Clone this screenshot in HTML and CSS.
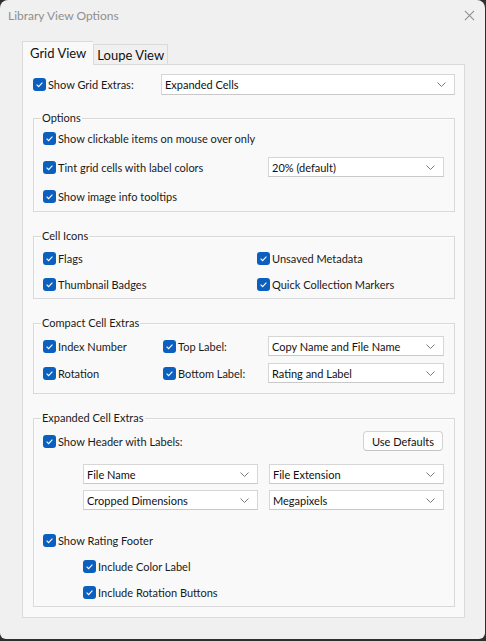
FILE: index.html
```html
<!DOCTYPE html>
<html lang="en">
<head>
<meta charset="utf-8">
<title>Library View Options</title>
<link rel="stylesheet" href="styles.css">
</head>
<body>
<div class="window">
  <div class="titlebar">
    <span class="title">Library View Options</span>
    <svg class="close" width="12" height="12" viewBox="0 0 12 12"><path d="M1 1 L11 11 M11 1 L1 11" stroke="#8c8c8c" stroke-width="1.1" fill="none"/></svg>
  </div>
  <div class="tabs">
    <div class="tab active">Grid View</div>
    <div class="tab">Loupe View</div>
  </div>
  <div class="panel">
    <div class="top-row">
      <label class="cb"><span class="box"><svg viewBox="0 0 13 13"><path d="M3.6 6.7 L5.6 8.6 L9.4 4.6"/></svg></span>Show Grid Extras:</label>
      <div class="select"><span>Expanded Cells</span><svg class="chev" viewBox="0 0 9 5"><path d="M0.5 0.5 L4.5 4.5 L8.5 0.5"/></svg></div>
    </div>

    <fieldset class="group g-options">
      <legend>Options</legend>
      <label class="cb"><span class="box"><svg viewBox="0 0 13 13"><path d="M3.6 6.7 L5.6 8.6 L9.4 4.6"/></svg></span>Show clickable items on mouse over only</label>
      <div class="split">
        <label class="cb"><span class="box"><svg viewBox="0 0 13 13"><path d="M3.6 6.7 L5.6 8.6 L9.4 4.6"/></svg></span>Tint grid cells with label colors</label>
        <div class="select"><span>20% (default)</span><svg class="chev" viewBox="0 0 9 5"><path d="M0.5 0.5 L4.5 4.5 L8.5 0.5"/></svg></div>
      </div>
      <label class="cb last-opt"><span class="box"><svg viewBox="0 0 13 13"><path d="M3.6 6.7 L5.6 8.6 L9.4 4.6"/></svg></span>Show image info tooltips</label>
    </fieldset>

    <fieldset class="group g-icons">
      <legend>Cell Icons</legend>
      <label class="cb"><span class="box"><svg viewBox="0 0 13 13"><path d="M3.6 6.7 L5.6 8.6 L9.4 4.6"/></svg></span>Flags</label>
      <label class="cb"><span class="box"><svg viewBox="0 0 13 13"><path d="M3.6 6.7 L5.6 8.6 L9.4 4.6"/></svg></span>Unsaved Metadata</label>
      <label class="cb"><span class="box"><svg viewBox="0 0 13 13"><path d="M3.6 6.7 L5.6 8.6 L9.4 4.6"/></svg></span>Thumbnail Badges</label>
      <label class="cb"><span class="box"><svg viewBox="0 0 13 13"><path d="M3.6 6.7 L5.6 8.6 L9.4 4.6"/></svg></span>Quick Collection Markers</label>
    </fieldset>

    <fieldset class="group g-compact">
      <legend>Compact Cell Extras</legend>
      <label class="cb"><span class="box"><svg viewBox="0 0 13 13"><path d="M3.6 6.7 L5.6 8.6 L9.4 4.6"/></svg></span>Index Number</label>
      <label class="cb"><span class="box"><svg viewBox="0 0 13 13"><path d="M3.6 6.7 L5.6 8.6 L9.4 4.6"/></svg></span>Top Label:</label>
      <div class="select"><span>Copy Name and File Name</span><svg class="chev" viewBox="0 0 9 5"><path d="M0.5 0.5 L4.5 4.5 L8.5 0.5"/></svg></div>
      <label class="cb"><span class="box"><svg viewBox="0 0 13 13"><path d="M3.6 6.7 L5.6 8.6 L9.4 4.6"/></svg></span>Rotation</label>
      <label class="cb"><span class="box"><svg viewBox="0 0 13 13"><path d="M3.6 6.7 L5.6 8.6 L9.4 4.6"/></svg></span>Bottom Label:</label>
      <div class="select"><span>Rating and Label</span><svg class="chev" viewBox="0 0 9 5"><path d="M0.5 0.5 L4.5 4.5 L8.5 0.5"/></svg></div>
    </fieldset>

    <fieldset class="group g-expanded">
      <legend>Expanded Cell Extras</legend>
      <div class="header-row">
        <label class="cb"><span class="box"><svg viewBox="0 0 13 13"><path d="M3.6 6.7 L5.6 8.6 L9.4 4.6"/></svg></span>Show Header with Labels:</label>
        <button class="btn" type="button">Use Defaults</button>
      </div>
      <div class="select-grid">
        <div class="select"><span>File Name</span><svg class="chev" viewBox="0 0 9 5"><path d="M0.5 0.5 L4.5 4.5 L8.5 0.5"/></svg></div>
        <div class="select"><span>File Extension</span><svg class="chev" viewBox="0 0 9 5"><path d="M0.5 0.5 L4.5 4.5 L8.5 0.5"/></svg></div>
        <div class="select"><span>Cropped Dimensions</span><svg class="chev" viewBox="0 0 9 5"><path d="M0.5 0.5 L4.5 4.5 L8.5 0.5"/></svg></div>
        <div class="select"><span>Megapixels</span><svg class="chev" viewBox="0 0 9 5"><path d="M0.5 0.5 L4.5 4.5 L8.5 0.5"/></svg></div>
      </div>
      <label class="cb footer-cb"><span class="box"><svg viewBox="0 0 13 13"><path d="M3.6 6.7 L5.6 8.6 L9.4 4.6"/></svg></span>Show Rating Footer</label>
      <label class="cb sub-cb"><span class="box"><svg viewBox="0 0 13 13"><path d="M3.6 6.7 L5.6 8.6 L9.4 4.6"/></svg></span>Include Color Label</label>
      <label class="cb sub-cb"><span class="box"><svg viewBox="0 0 13 13"><path d="M3.6 6.7 L5.6 8.6 L9.4 4.6"/></svg></span>Include Rotation Buttons</label>
    </fieldset>
  </div>
</div>
</body>
</html>
```
FILE: styles.css
```css
* { box-sizing: border-box; }

html, body {
  margin: 0;
  height: 100%;
  background: #2e2e2e;
}

body {
  font-family: "Lato", "Noto Sans", sans-serif;
  font-size: 11px;
  color: #1a1a1a;
}

.window {
  width: 485px;
  height: 639px;
  background: #f0f0f0;
  border-radius: 8px 8px 6px 6px;
  overflow: hidden;
}

.titlebar {
  height: 32px;
  display: flex;
  align-items: center;
  justify-content: space-between;
  padding: 0 9px 1px 8px;
}

.title {
  font-size: 12px;
  color: #8f8f8f;
}

.close {
  width: 11px;
  height: 11px;
  margin-right: 1px;
}

.tabs {
  display: flex;
  align-items: flex-end;
  padding: 9px 0 0 22px;
  height: 33px;
}

.tab {
  height: 21px;
  padding: 0 3px;
  border: 1px solid #dadada;
  border-bottom: none;
  background: #f0f0f0;
  font-size: 13px;
  line-height: 21px;
  color: #111;
}

.tab.active {
  position: relative;
  z-index: 1;
  height: 25px;
  margin-bottom: -1px;
  padding: 0 7px;
  background: #f9f9f9;
  line-height: 22px;
  border-right: none;
}

.panel {
  position: relative;
  width: 443px;
  margin-left: 22px;
  margin-top: -1px;
  border: 1px solid #dadada;
  background: #f9f9f9;
  padding: 9px 9px 10px 10px;
  display: flex;
  flex-direction: column;
  gap: 15px;
}

.top-row {
  display: grid;
  grid-template-columns: 128px 1fr;
  align-items: center;
  height: 21px;
}

.top-row .select {
  height: 21px;
}

.cb {
  display: flex;
  align-items: center;
  gap: 2px;
  height: 20px;
  white-space: nowrap;
}

.box {
  width: 13px;
  height: 13px;
  border-radius: 3px;
  background: #0a5fbf;
  display: flex;
  flex: none;
}

.box svg {
  width: 13px;
  height: 13px;
}

.box path {
  fill: none;
  stroke: #fff;
  stroke-width: 1.1;
}

.select {
  height: 20px;
  background: #fff;
  border: 1px solid #d6d6d6;
  border-bottom-color: #c8c8c8;
  display: flex;
  align-items: center;
  justify-content: space-between;
  padding: 0 8px 0 3px;
  white-space: nowrap;
  color: #111;
}

.chev {
  width: 9px;
  height: 5px;
  flex: none;
}

.chev path {
  fill: none;
  stroke: #7a7a7a;
  stroke-width: 1;
}

.group {
  margin: 0;
  min-width: 0;
  border: 1px solid #d9d9d9;
  box-shadow: inset 1px 1px 0 #fdfdfd;
  padding: 3px 10px 5px 9px;
}

.group + .group {
  margin-top: 1px;
}

.group legend {
  margin-left: -2px;
  padding: 0 1px;
  line-height: 16px;
  color: #1a1a1a;
}

.g-options {
  display: flex;
  flex-direction: column;
  padding-top: 2px;
  padding-bottom: 5px;
}

.split {
  margin-top: 9px;
  display: grid;
  grid-template-columns: 1fr 176px;
  align-items: center;
}

.last-opt {
  margin-top: 9px;
}

.g-icons {
  display: grid;
  grid-template-columns: 214px 1fr;
  row-gap: 6px;
  padding-top: 4px;
  padding-bottom: 4px;
}

.g-compact {
  display: grid;
  grid-template-columns: 120px 105px 1fr;
  row-gap: 7px;
  align-items: center;
  padding-top: 5px;
  padding-bottom: 10px;
}

.g-expanded {
  padding-top: 5px;
  padding-bottom: 4px;
  display: flex;
  flex-direction: column;
}

.header-row {
  display: flex;
  align-items: center;
  justify-content: space-between;
  height: 20px;
}

.btn {
  width: 80px;
  height: 20px;
  margin-right: 1px;
  padding: 0;
  font: inherit;
  color: #111;
  background: #fdfdfd;
  border: 1px solid #d3d3d3;
  border-bottom-color: #c4c4c4;
  border-radius: 4px;
}

.select-grid {
  margin-top: 13px;
  padding-left: 40px;
  display: grid;
  grid-template-columns: 175px 175px;
  column-gap: 11px;
  row-gap: 6px;
}

.footer-cb {
  margin-top: 20px;
}

.sub-cb {
  margin-top: 6px;
  padding-left: 40px;
}
```
